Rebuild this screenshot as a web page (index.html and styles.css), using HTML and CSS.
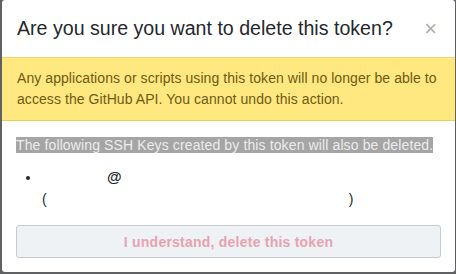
FILE: index.html
```html
<!DOCTYPE html>
<html>
<head>
<meta charset="utf-8">
<link rel="stylesheet" href="styles.css">
</head>
<body>
<div class="dialog">
  <div class="header">
    <h3 class="title">Are you sure you want to delete this token?</h3>
    <span class="close">&times;</span>
  </div>
  <div class="flash">Any applications or scripts using this token will no longer be able to access the GitHub API. You cannot undo this action.</div>
  <div class="body">
    <p class="note"><span class="sel">The following SSH Keys created by this token will also be deleted. </span></p>
    <ul class="keys">
      <li><span class="gap-name"></span><span class="at">@</span><br><span class="gap-paren">(</span><span class="gap-fp"></span>)</li>
    </ul>
    <button class="btn">I understand, delete this token</button>
  </div>
</div>
</body>
</html>
```
FILE: styles.css
```css
html, body { margin: 0; padding: 0; }
body {
  background: #5f6163;
  width: 456px;
  height: 274px;
  overflow: hidden;
  font-family: "Liberation Sans", Arial, sans-serif;
}
.dialog {
  margin-left: 2px;
  width: 453px;
  height: 272px;
  background: #fff;
  border-radius: 3px;
  overflow: hidden;
}
.header {
  height: 57px;
  display: flex;
  align-items: center;
  justify-content: space-between;
  padding: 0 18px 0 15px;
  box-sizing: border-box;
}
.title {
  margin: 0;
  font-size: 19.6px;
  font-weight: normal;
  color: #24292e;
}
.close {
  font-size: 22px;
  color: #b0b0b0;
  line-height: 1;
}
.flash {
  background: #ffe87f;
  border-top: 1px solid #f4d96a;
  border-bottom: 1px solid #e8cf5c;
  color: #6f5a16;
  font-size: 14px;
  letter-spacing: 0.07px;
  line-height: 21px;
  padding: 10px 15px 10px;
}
.body {
  padding: 0 14px;
}
.note {
  margin: 15px 0 0;
  font-size: 14px;
  letter-spacing: 0.12px;
  line-height: 18px;
}
.sel {
  background: #a5a5a5;
  color: #ececec;
}
.keys {
  margin: 12px 0 0;
  padding-left: 25px;
  font-size: 14px;
  line-height: 22px;
  color: #24292e;
}
.keys li { list-style: disc; }
.at { font-weight: bold; font-size: 15px; }
.gap-name { display: inline-block; width: 66px; }
.gap-paren { padding-left: 1px; }
.gap-fp { display: inline-block; width: 302px; }
.btn {
  display: block;
  margin-top: 15px;
  width: 425px;
  height: 33px;
  background: #eef2f5;
  border: 1px solid #c6cbd0;
  border-radius: 3px;
  color: #e8a2b0;
  font-family: "Liberation Sans", Arial, sans-serif;
  font-weight: bold;
  font-size: 14px;
  letter-spacing: 0.23px;
}
```
